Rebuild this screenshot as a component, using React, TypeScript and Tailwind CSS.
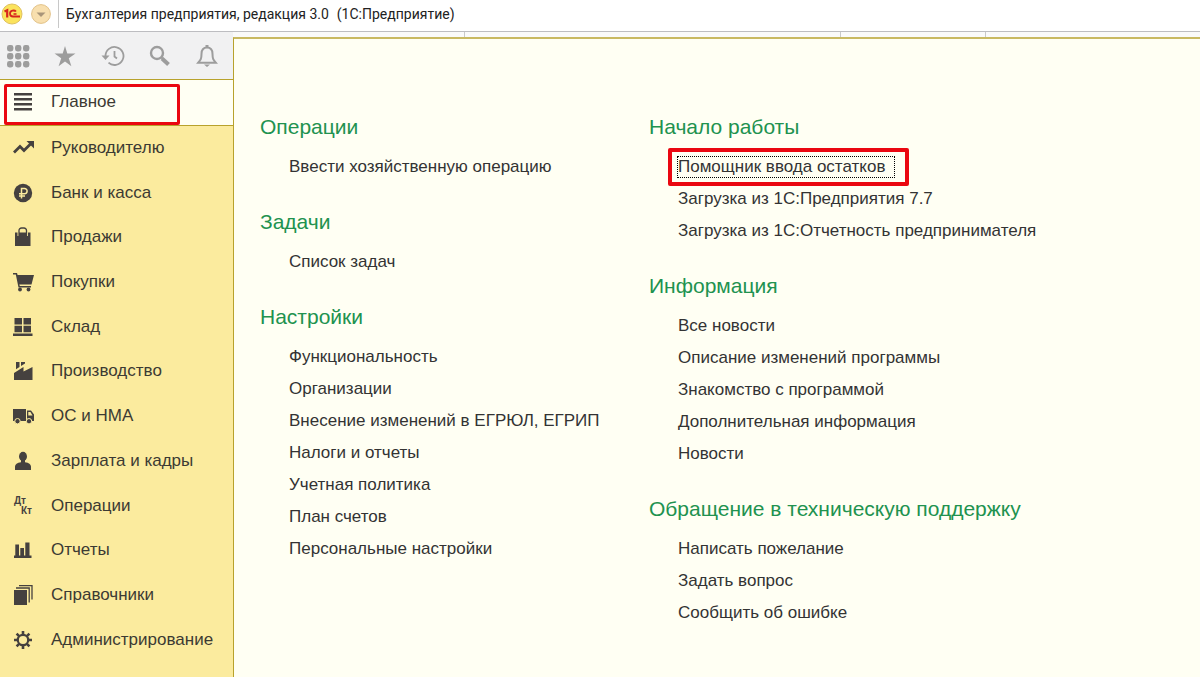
import type { ReactNode } from 'react'
import clsx from 'clsx'

interface NavItem {
  label: string
  icon: ReactNode
  active?: boolean
}

interface Group {
  title: string
  links: string[]
}

const navItems: NavItem[] = [
  {
    label: 'Главное',
    active: true,
    icon: <path d="M1 1h18v2.400H1zM1 6h18v2.400H1zM1 11h18v2.400H1zM1 16h18v2.400H1z" />,
  },
  {
    label: 'Руководителю',
    icon: (
      <>
        <path d="M1 14.500l6-6 4 4 6.500-6.500" fill="none" stroke="currentColor" strokeWidth="2.800" />
        <path d="M13.500 3H21v7.500z" />
      </>
    ),
  },
  {
    label: 'Банк и касса',
    icon: (
      <>
        <circle cx="10" cy="10" r="9.200" />
        <path
          d="M8.500 15.500V5.500h3a2.500 2.500 0 0 1 0 5.200H6M6 13h6"
          fill="none"
          stroke="#fbeb9e"
          strokeWidth="1.500"
        />
      </>
    ),
  },
  {
    label: 'Продажи',
    icon: (
      <>
        <path d="M2 5.500h2.500V9H6V5.500h7.500V9H15V5.500h2.500V19H2z" />
        <path d="M6 9V3.500A2.500 2.500 0 0 1 8.500 1h2.500a2.500 2.500 0 0 1 2.500 2.500V9" fill="none" stroke="currentColor" strokeWidth="1.300" />
      </>
    ),
  },
  {
    label: 'Покупки',
    icon: (
      <>
        <path d="M0 1h4l.6 2H21l-2.500 9.500H6.300L6.800 14H18v1.500H5.500L2.800 2.600H0z" />
        <circle cx="7" cy="17.500" r="1.900" />
        <circle cx="15.500" cy="17.500" r="1.900" />
      </>
    ),
  },
  {
    label: 'Склад',
    icon: <path d="M1.500 1H9v6.500H1.500zM10.500 1H18v6.500h-7.500zM1.500 8.700H9v6.500H1.500zM10.500 8.700H18v6.500h-7.500zM0 16.500h19.500V19H0z" />,
  },
  {
    label: 'Производство',
    icon: <path d="M3 1h3.500v5L3 8.200zM8 1h4v1.500L8 5zM1 19v-7l9.500-6v4.500L19.500 6v13z" />,
  },
  {
    label: 'ОС и НМА',
    icon: (
      <>
        <path d="M0 3h13v12H0z" />
        <path d="M14 4.500h4l3 4V15h-7zM15.300 6v3.500h4.200L17.400 6z" fillRule="evenodd" />
        <circle cx="4.500" cy="15.200" r="2.700" stroke="#fbeb9e" />
        <circle cx="16" cy="15.200" r="2.700" stroke="#fbeb9e" />
      </>
    ),
  },
  {
    label: 'Зарплата и кадры',
    icon: (
      <>
        <ellipse cx="10" cy="5.500" rx="4" ry="4.700" />
        <path d="M8 9h4v2.200c4 .5 5.800 1.800 6 4.300v3.500H2v-3.500c.2-2.500 2-3.800 6-4.300z" />
      </>
    ),
  },
  {
    label: 'Операции',
    icon: (
      <g fontFamily="Liberation Sans, sans-serif" fontWeight="700" fontSize="10">
        <text x="1" y="8">Дт</text>
        <text x="8" y="18">Кт</text>
      </g>
    ),
  },
  {
    label: 'Отчеты',
    icon: <path d="M1 15.500h1.300V4.500H6v11h1.300V8H11v7.500h1.300V2.500H16.500v13H18.500V18H1z" />,
  },
  {
    label: 'Справочники',
    icon: (
      <>
        <path d="M1 5h13v15H1z" />
        <path d="M3 3h13.200v14.500M6 .6h13v13.900" fill="none" stroke="currentColor" strokeWidth="1.300" />
      </>
    ),
  },
  {
    label: 'Администрирование',
    icon: (
      <g fill="none" stroke="currentColor">
        <circle cx="10" cy="10" r="5.200" strokeWidth="2.200" />
        <path
          d="M10 1v3.500M10 15.500V19M1 10h3.500M15.500 10H19M3.600 3.600l2.500 2.500M13.900 13.900l2.500 2.500M3.600 16.400l2.500-2.500M13.900 6.100l2.500-2.500"
          strokeWidth="2.600"
        />
      </g>
    ),
  },
]

const columns: Group[][] = [
  [
    { title: 'Операции', links: ['Ввести хозяйственную операцию'] },
    { title: 'Задачи', links: ['Список задач'] },
    {
      title: 'Настройки',
      links: [
        'Функциональность',
        'Организации',
        'Внесение изменений в ЕГРЮЛ, ЕГРИП',
        'Налоги и отчеты',
        'Учетная политика',
        'План счетов',
        'Персональные настройки',
      ],
    },
  ],
  [
    {
      title: 'Начало работы',
      links: [
        'Помощник ввода остатков',
        'Загрузка из 1С:Предприятия 7.7',
        'Загрузка из 1С:Отчетность предпринимателя',
      ],
    },
    {
      title: 'Информация',
      links: [
        'Все новости',
        'Описание изменений программы',
        'Знакомство с программой',
        'Дополнительная информация',
        'Новости',
      ],
    },
    {
      title: 'Обращение в техническую поддержку',
      links: ['Написать пожелание', 'Задать вопрос', 'Сообщить об ошибке'],
    },
  ],
]

const focusedLink = 'Помощник ввода остатков'

const tools: { label: string; icon: ReactNode }[] = [
  {
    label: 'Все функции',
    icon: (
      <>
        {[4, 12, 20].map((y) =>
          [4, 12, 20].map((x) => <rect key={`${x}-${y}`} x={x - 3} y={y - 3} width="6.400" height="6.400" rx="2.400" />),
        )}
      </>
    ),
  },
  {
    label: 'Избранное',
    icon: <path d="M12 2l2.300 7.500H22.500l-6.700 4.800 2.600 8L12 17.500l-6.400 4.800 2.600-8L1.500 9.500h8.200z" />,
  },
  {
    label: 'История',
    icon: (
      <g fill="none" stroke="currentColor" strokeWidth="1.800">
        <path d="M4.500 12a9 9 0 1 1 3 6.700" />
        <path d="M13.500 7v5.500l2.500 2" />
        <path d="M.5 11.500h8l-4 4.500z" fill="currentColor" stroke="none" />
      </g>
    ),
  },
  {
    label: 'Поиск',
    icon: (
      <g fill="none" stroke="currentColor">
        <circle cx="9" cy="9" r="6" strokeWidth="2.400" />
        <path d="M13 13l2 2" strokeWidth="2" />
        <path d="M14 14.500l6.500 6" strokeWidth="4" />
      </g>
    ),
  },
  {
    label: 'Уведомления',
    icon: (
      <>
        <path
          d="M12 3.500c-4.200 0-5.500 3-5.500 6.500 0 5-1 6-3.300 8.700h17.600c-2.300-2.700-3.300-3.700-3.300-8.700 0-3.500-1.300-6.500-5.500-6.500z"
          fill="none"
          stroke="currentColor"
          strokeWidth="2"
        />
        <path d="M10.500 1h3v2.500h-3zM9 20.500h6L12 23z" />
      </>
    ),
  },
]

function TitleBar() {
  return (
    <header className="flex h-8 items-center border-b border-[#bdbdc1] bg-white pb-1">
      <svg viewBox="0 0 22 22" className="ml-px size-[22px]" aria-hidden="true">
        <circle cx="11" cy="11" r="10" fill="#fbe35c" stroke="#e0c160" />
        <g fill="none" stroke="#d7261e">
          <path d="M3.500 8.500L6.200 7.300V14.500" strokeWidth="2.200" />
          <path d="M15 8.500c-1.500-1.600-6-1.400-6 2 0 2 1.500 3 3 3h7" strokeWidth="1.800" />
          <path d="M15.500 11h-3" strokeWidth="1.600" />
        </g>
      </svg>
      <button className="ml-2 size-5" aria-label="Меню">
        <svg viewBox="0 0 20 20" className="size-5">
          <circle cx="10" cy="10" r="9.400" fill="#f8dfae" stroke="#e2c289" />
          <path d="M5.500 8.500h9L10 13z" fill="#a99579" />
        </svg>
      </button>
      <div className="ml-[7px] h-7 w-px bg-[#c8c8c8]" />
      <h1 className="ml-[7px] flex gap-2 font-['Roboto',sans-serif] text-sm whitespace-nowrap text-[#222]">
        <span>Бухгалтерия предприятия, редакция 3.0</span>
        <span>(1С:Предприятие)</span>
      </h1>
    </header>
  )
}

function Sidebar() {
  return (
    <aside className="flex w-[233px] shrink-0 flex-col bg-[#fbeb9e]">
      <div className="flex h-12 items-center justify-between border-b border-[#b8a22c] bg-[#f1f1f2] pr-[14px] pl-[6px] text-[#9d9d9d]">
        {tools.map((t) => (
          <button key={t.label} aria-label={t.label}>
            <svg viewBox="0 0 24 24" className="size-6" fill="currentColor">
              {t.icon}
            </svg>
          </button>
        ))}
      </div>
      <nav className="flex flex-1 flex-col pb-[15px]">
        {navItems.map((item) => (
          <a
            key={item.label}
            href="#"
            className={clsx(
              'relative flex flex-1 items-center gap-[17px] pl-[13px] text-[17px] leading-5 text-[#3c3a33]',
              item.active && 'border-b border-[#b8a22c] bg-[#fffff3]',
            )}
          >
            <svg viewBox="0 0 21 20" className="h-5 w-[21px] shrink-0 text-[#45413f]" fill="currentColor" aria-hidden="true">
              {item.icon}
            </svg>
            <span>{item.label}</span>
            {item.active && (
              <span className="absolute inset-y-0 right-[53px] left-1 mt-1 rounded-xs border-[3px] border-[#ea0710]" />
            )}
          </a>
        ))}
      </nav>
    </aside>
  )
}

function LinkGroup({ title, links }: Group) {
  return (
    <section>
      <h2 className="mb-[10px] text-[21px] leading-7 text-[#21924f]">{title}</h2>
      <ul className="pl-[29px]">
        {links.map((link) => (
          <li key={link} className="flex h-8 items-center">
            <a href="#" className="relative text-[17px] leading-5 whitespace-nowrap">
              {link}
              {link === focusedLink && (
                <>
                  <span className="absolute -inset-y-px -right-[10px] -left-px border border-dotted border-black" />
                  <span className="absolute -inset-y-[9px] -right-[24px] -left-[10px] rounded-xs border-4 border-[#ea0710]" />
                </>
              )}
            </a>
          </li>
        ))}
      </ul>
    </section>
  )
}

export default function App() {
  return (
    <div className="flex min-h-screen flex-col bg-white font-['Liberation_Sans',Arial,sans-serif] text-[#333]">
      <TitleBar />
      <div className="flex flex-1">
        <Sidebar />
        <div className="flex flex-1 flex-col">
          <div className="flex h-[5px] bg-[#fafafa]">
            <div className="w-[232px] border-r border-[#c9c9c9]" />
            <div className="w-[376px] border-r border-[#c9c9c9]" />
            <div className="w-[145px] border-r border-[#c9c9c9]" />
          </div>
          <main className="grid flex-1 grid-cols-[389px_1fr] border-t-2 border-l border-t-[#c9b962] border-l-[#b8a22c] bg-[#fffff3] pt-[74px] pl-[26px]">
            {columns.map((groups, i) => (
              <div key={i} className="flex flex-col gap-[25px]">
                {groups.map((g) => (
                  <LinkGroup key={g.title} {...g} />
                ))}
              </div>
            ))}
          </main>
        </div>
      </div>
    </div>
  )
}
